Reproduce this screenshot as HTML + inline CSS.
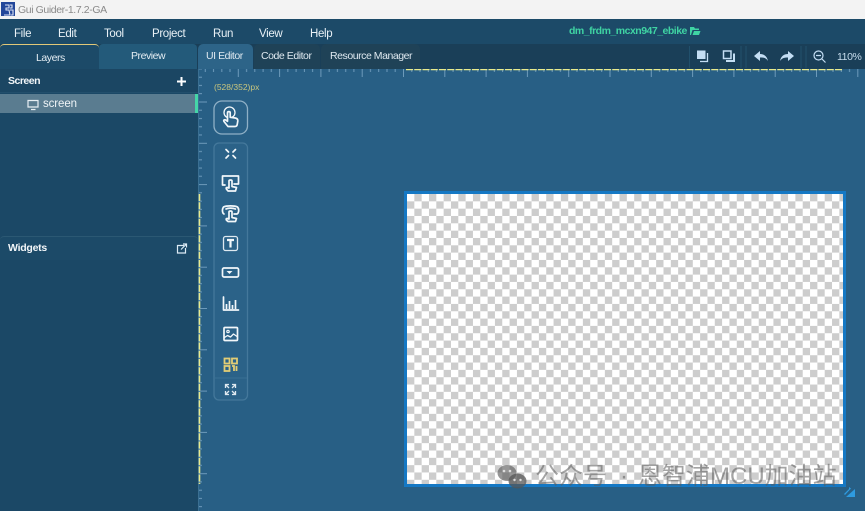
<!DOCTYPE html>
<html><head><meta charset="utf-8"><style>
*{box-sizing:border-box}
html,body{margin:0;padding:0;width:865px;height:511px;overflow:hidden;background:#285f85;font-family:"Liberation Sans","Noto Sans CJK SC",sans-serif}
.a{position:absolute;white-space:nowrap}
.m{top:27px;font-size:11.5px;color:#e9f1f6;line-height:14px;letter-spacing:-.35px}
.t{font-size:10.5px;color:#dfe9f0;line-height:14px;letter-spacing:-.45px}
.w{top:461px;font-size:24px;line-height:32px;color:rgba(90,90,90,.55)}
</style></head><body>
<svg class="a" style="left:0;top:0" width="865" height="511" viewBox="0 0 865 511">
<defs>
<pattern id="tx" x="196.5" y="69" width="41.3" height="10" patternUnits="userSpaceOnUse">
<path d="M.5 0v8M8.76 0v3M17 0v3M25.3 0v3M33.5 0v3" stroke="#6d9aba" stroke-width="1" fill="none"/></pattern>
<pattern id="ty" x="198" y="101.5" width="10" height="41.3" patternUnits="userSpaceOnUse">
<path d="M0 .5h9M0 8.76h4M0 17h4M0 25.3h4M0 33.5h4" stroke="#6d9aba" stroke-width="1" fill="none"/></pattern>
</defs>
<rect x="198" y="69" width="667" height="442" fill="#285f85"/>
<rect x="198" y="69" width="667" height="9" fill="url(#tx)"/>
<rect x="198" y="69" width="9" height="442" fill="url(#ty)"/>
<rect x="198" y="69" width="1" height="442" fill="#3a6f92"/>
<line x1="406" y1="69.5" x2="842" y2="69.5" stroke="#e9ea8c" stroke-width="1.6" stroke-dasharray="7 1.25"/>
<line x1="199.5" y1="194" x2="199.5" y2="484" stroke="#e9ea8c" stroke-width="1.6" stroke-dasharray="7 1.25"/>
</svg>

<div class="a" style="left:0;top:0;width:865px;height:19px;background:#f3f3f3"></div>
<div class="a" style="left:1px;top:2px;width:14px;height:14px;background:#23479a"></div>
<div class="a" style="left:18px;top:3px;font-size:10.5px;color:#8a8a8a;line-height:14px;letter-spacing:-.4px">Gui Guider-1.7.2-GA</div>
<div class="a" style="left:0;top:19px;width:865px;height:25px;background:#1c4a68"></div>
<div class="a" style="left:0;top:44px;width:865px;height:25px;background:#1a3f58"></div>
<div class="a m" style="left:14px">File</div>
<div class="a m" style="left:58px">Edit</div>
<div class="a m" style="left:104px">Tool</div>
<div class="a m" style="left:152px">Project</div>
<div class="a m" style="left:213px">Run</div>
<div class="a m" style="left:259px">View</div>
<div class="a m" style="left:310px">Help</div>
<div class="a" style="left:569px;top:25px;font-size:10.5px;font-weight:bold;color:#3fd3a3;line-height:13px;letter-spacing:-.5px">dm_frdm_mcxn947_ebike</div>

<div class="a" style="left:0;top:44px;width:99px;height:25px;background:#1c4a68;border-top:1px solid #e2c878;border-radius:4px 4px 0 0"></div>
<div class="a" style="left:99px;top:44px;width:98px;height:25px;background:#235a7a;border-radius:4px 4px 0 0"></div>
<div class="a" style="left:198px;top:44px;width:55px;height:25px;background:#2d6488;border-radius:5px 5px 0 0"></div>
<div class="a" style="left:254px;top:44px;width:66px;height:25px;background:#1f4257;border-radius:5px 5px 0 0"></div>
<div class="a" style="left:321px;top:44px;width:99px;height:25px;background:#1f4257;border-radius:5px 5px 0 0"></div>
<div class="a t" style="left:36px;top:51px;color:#e4edf3">Layers</div>
<div class="a t" style="left:131px;top:49px;color:#e4edf3">Preview</div>
<div class="a t" style="left:206px;top:49px">UI Editor</div>
<div class="a t" style="left:261px;top:49px">Code Editor</div>
<div class="a t" style="left:330px;top:49px">Resource Manager</div>

<div class="a" style="left:0;top:69px;width:198px;height:442px;background:#1b4866"></div>
<div class="a" style="left:0;top:69px;width:198px;height:24px;background:#1b4663;border-bottom:1px solid #234f6c"></div>
<div class="a" style="left:8px;top:74px;font-size:10.5px;font-weight:bold;color:#f2f6f9;line-height:14px;letter-spacing:-.5px">Screen</div>
<div class="a" style="left:0;top:94px;width:195px;height:19px;background:#5a7c90"></div>
<div class="a" style="left:195px;top:94px;width:3px;height:19px;background:#45d6a8"></div>
<div class="a" style="left:43px;top:97px;font-size:11.5px;color:#eef3f6;line-height:14px;letter-spacing:-.1px">screen</div>
<div class="a" style="left:0;top:236px;width:198px;height:24px;background:#1c4a68;border-top:1px solid #2b5873;border-radius:4px 4px 0 0"></div>
<div class="a" style="left:8px;top:241px;font-size:10.5px;font-weight:bold;color:#f2f6f9;line-height:14px;letter-spacing:-.25px">Widgets</div>

<div class="a" style="left:214px;top:81px;font-size:8.5px;color:#c9c67e;line-height:12px">(528/352)px</div>
<div class="a" style="left:837px;top:50px;font-size:10.5px;color:#c6dcec;line-height:14px;letter-spacing:-.4px">110%</div>

<div class="a" style="left:407px;top:194px;width:436px;height:290px;background-color:#fff;background-image:conic-gradient(#cdcdcd 25%,#fff 0 50%,#cdcdcd 0 75%,#fff 0);background-size:14.66px 14.66px"></div>
<div class="a" style="left:404px;top:191px;width:442px;height:296px;border:3px solid #1578c4"></div>

<svg class="a" style="left:0;top:0" width="865" height="511" viewBox="0 0 865 511">
<!-- logo -->
<path d="M5 5h4v3H6v2h3l1 5H4M10 5h2v3h-2M10 10h3v5h-2" fill="none" stroke="#dfe6f5" stroke-width="1.1"/>
<!-- folder -->
<path d="M690 35v-8h4l1 1.500h4v1.500h-6.500l-1.500 5zM692.500 35l1.500-4h6.500l-1.500 4z" fill="#3fd3a3"/>
<!-- plus -->
<path d="M181.500 77v9M177 81.500h9" stroke="#fff" stroke-width="2"/>
<!-- monitor -->
<path d="M28 100.500h10v6.500H28zM31 109.500h4.500" fill="none" stroke="#e6eef3" stroke-width="1.200"/>
<!-- external -->
<path d="M184 245.500h-6.500v7.500h8v-5" fill="none" stroke="#dcebf5" stroke-width="1.200"/>
<path d="M181 249.500l5-5M183 244h3.500v3.500" fill="none" stroke="#dcebf5" stroke-width="1.200"/>

<!-- top right icons -->
<path d="M697 50.500h8.500v8.500H697z" fill="#c4def4"/>
<path d="M707.500 53v8.500H700" fill="none" stroke="#c4def4" stroke-width="1.300"/>
<path d="M723.500 51h7.500v7.500h-7.500z" fill="none" stroke="#c4def4" stroke-width="1.500"/>
<path d="M735 53.500v8.500h-9v-2h7v-6.500z" fill="#c4def4"/>
<path d="M754 56l6-5v3c4 0 7 2 8 7-2-3-4-3.500-8-3.500v3.500z" fill="#c4def4"/>
<path d="M794 56l-6-5v3c-4 0-7 2-8 7 2-3 4-3.500 8-3.500v3.500z" fill="#c4def4"/>
<circle cx="818.500" cy="55.500" r="4.500" fill="none" stroke="#c4def4" stroke-width="1.200"/>
<path d="M816 55.500h5M822 59l3.500 3.500" stroke="#c4def4" stroke-width="1.200"/>
<path d="M689.500 46v22M741 46v22M746 46v22M801 46v22M806 46v22" stroke="#21506c" stroke-width="1"/>

<!-- toolbar boxes -->
<rect x="214" y="101" width="33.500" height="33" rx="8" fill="#2b6288" stroke="#8fb0c6" stroke-width="1.300"/>
<rect x="214" y="143" width="33.500" height="257" rx="5" fill="#2b6288" stroke="#44789b" stroke-width="1.300"/>
<line x1="215" y1="378" x2="247" y2="378" stroke="#3a7095"/>

<g fill="none" stroke="#f2f7fa" stroke-width="1.700" stroke-linejoin="round" stroke-linecap="round">
<!-- hand -->
<circle cx="229.500" cy="112.500" r="5.500" stroke-width="1.300"/>
<path d="M228 126.500l-4-5c-.8-1.500.8-2.300 2-1.200l1.500 1v-8.500c0-1.600 2.700-1.600 2.700 0v4.500l5 .7c1.800.4 2.800 1.400 2.600 3l-.6 3.500c-.2 1.300-1 2-2.200 2h-5z" fill="#2b6288"/>
<!-- collapse -->
<path d="M226 149.500l2.500 2.500M235.500 149.500l-2.500 2.500M226 158l2.500-2.500M235.500 158l-2.500-2.500" stroke-width="1.700"/>
<!-- button hand -->
<path d="M225 185h-2.500v-9h16v8h-4.500" />
<path d="M229 181v7l-2-.5c-1 0-1 1-.5 1.700l1.500 1.800h7.500l1-3.500-4.500-1V181c0-1.300-3-1.300-3 0z" fill="#2b6288"/>
<!-- second -->
<path d="M224 214c-2-1-2-5-.5-7 3-1.500 11-1.500 14 0 1.800 2 1.500 6-.5 7h-3"/>
<path d="M226 209c2-1.200 7-1.200 9.500 0"/>
<path d="M229 212v7l-2-.5c-1 0-1 1-.5 1.700l1.500 1.300h7.500l1-3-4.500-1V212c0-1.300-3-1.300-3 0z" fill="#2b6288"/>
<!-- T -->
<rect x="223.500" y="236.500" width="14" height="14" rx="2" stroke="#dfe9f0" stroke-width="1.300"/>
<path d="M227 240h7M230.500 240v7.500" stroke-width="2.200" stroke-linecap="butt"/>
<!-- dropdown -->
<rect x="222.500" y="268" width="16" height="9" rx="1.500"/>
<!-- chart -->
<path d="M223.500 297v13h15"/>
<path d="M226.500 309v-5M229.500 309v-8M232.500 309v-4M235.500 309v-9" stroke-width="1.700" stroke-linecap="butt"/>
<!-- image -->
<rect x="224" y="327.500" width="13.500" height="13" rx="1"/>
<path d="M224.500 337.500l3-2 3 1.500 3-3 3.500 2.500" stroke-width="1.300"/>
<circle cx="228" cy="331.500" r="1.200" stroke-width="1.200"/>
<!-- QR -->
<g stroke="#e2cd75" stroke-width="1.800" stroke-linecap="butt" stroke-linejoin="miter">
<rect x="224.500" y="358.500" width="5" height="5"/><rect x="232" y="358.500" width="5" height="5"/><rect x="224.500" y="366" width="5" height="5"/>
<path d="M232 366h2v5M236.500 366v5"/>
</g>
<!-- expand -->
<g stroke-width="1.300" stroke="#dfe9f0" stroke-linecap="butt" stroke-linejoin="miter">
<path d="M225.500 388v-3.500h3.500M225.500 384.500l3.500 3.500"/>
<path d="M235.500 388v-3.500h-3.500M235.500 384.500l-3.500 3.500"/>
<path d="M225.500 391v3.500h3.500M225.500 394.500l3.500-3.500"/>
<path d="M235.500 391v3.500h-3.500M235.500 394.500l-3.500-3.500"/>
</g>
</g>
<path d="M226.500 271h6l-3 3z" fill="#f2f7fa"/>
<!-- resize corner -->
<path d="M844 494l6-6 1 .5-6 6.500zM846 497l9-8v8zM849 487l2 1.500-2 1z" fill="#2e9be0"/>
<!-- wechat watermark -->
<ellipse cx="507" cy="473" rx="9.500" ry="8" fill="#5d5d5d" fill-opacity=".65"/>
<ellipse cx="517.500" cy="481" rx="9" ry="7.500" fill="#555" fill-opacity=".75"/>
<circle cx="504" cy="471" r="1.300" fill="#ddd"/><circle cx="510" cy="471" r="1.300" fill="#ddd"/>
<circle cx="514.500" cy="480" r="1.200" fill="#ddd"/><circle cx="520.500" cy="480" r="1.200" fill="#ddd"/>
</svg>
<div class="a w" style="left:620px;font-family:'Liberation Sans',sans-serif">·</div>
<div class="a w" style="left:535px">公众号</div>
<div class="a w" style="left:638px">恩智浦</div>
<div class="a w" style="left:710px">MCU加油站</div>
</body></html>
